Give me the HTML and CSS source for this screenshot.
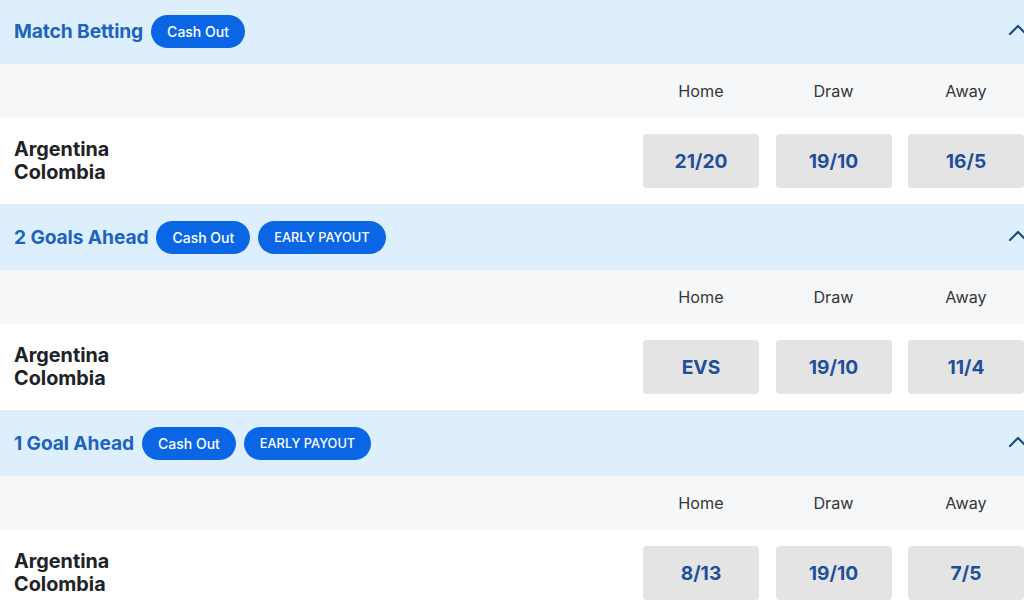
FILE: index.html
```html
<!DOCTYPE html>
<html>
<head>
<meta charset="utf-8">
<link rel="stylesheet" href="styles.css">
</head>
<body>
<div class="page">
  <section class="market">
    <div class="market-head">
      <h2 class="title">Match Betting</h2>
      <span class="pill">Cash Out</span>
      <svg class="chev" width="20" height="12" viewBox="0 0 20 12"><polyline points="2,10 10,2 18,10" fill="none" stroke="#1b4a80" stroke-width="2.2" stroke-linecap="round" stroke-linejoin="round"/></svg>
    </div>
    <div class="labels">
      <div class="cols"><span>Home</span><span>Draw</span><span>Away</span></div>
    </div>
    <div class="event">
      <div class="teams"><div>Argentina</div><div>Colombia</div></div>
      <div class="cols"><button class="odd">21/20</button><button class="odd">19/10</button><button class="odd">16/5</button></div>
    </div>
  </section>
  <section class="market">
    <div class="market-head">
      <h2 class="title">2 Goals Ahead</h2>
      <span class="pill">Cash Out</span>
      <span class="pill early">EARLY PAYOUT</span>
      <svg class="chev" width="20" height="12" viewBox="0 0 20 12"><polyline points="2,10 10,2 18,10" fill="none" stroke="#1b4a80" stroke-width="2.2" stroke-linecap="round" stroke-linejoin="round"/></svg>
    </div>
    <div class="labels">
      <div class="cols"><span>Home</span><span>Draw</span><span>Away</span></div>
    </div>
    <div class="event">
      <div class="teams"><div>Argentina</div><div>Colombia</div></div>
      <div class="cols"><button class="odd">EVS</button><button class="odd">19/10</button><button class="odd">11/4</button></div>
    </div>
  </section>
  <section class="market">
    <div class="market-head">
      <h2 class="title">1 Goal Ahead</h2>
      <span class="pill">Cash Out</span>
      <span class="pill early">EARLY PAYOUT</span>
      <svg class="chev" width="20" height="12" viewBox="0 0 20 12"><polyline points="2,10 10,2 18,10" fill="none" stroke="#1b4a80" stroke-width="2.2" stroke-linecap="round" stroke-linejoin="round"/></svg>
    </div>
    <div class="labels">
      <div class="cols"><span>Home</span><span>Draw</span><span>Away</span></div>
    </div>
    <div class="event">
      <div class="teams"><div>Argentina</div><div>Colombia</div></div>
      <div class="cols"><button class="odd">8/13</button><button class="odd">19/10</button><button class="odd">7/5</button></div>
    </div>
  </section>
</div>
</body>
</html>
```

FILE: styles.css
```css
html, body {
  margin: 0;
  padding: 0;
  background: #ffffff;
  overflow: hidden;
}
body {
  font-family: Inter, "Noto Sans", "Liberation Sans", sans-serif;
  color: #222428;
}
.page {
  margin-top: -2px;
}
.market {
  border-top: 2px solid #e4ebf1;
}
.market-head {
  height: 64px;
  background: #ddeffd;
  display: flex;
  align-items: center;
  padding-left: 14px;
  gap: 8px;
  overflow: hidden;
}
.title {
  margin: 0 0 2px 0;
  font-size: 19.2px;
  font-weight: 700;
  color: #1d63c0;
  letter-spacing: -0.1px;
}
.pill {
  height: 33px;
  padding: 0 16px;
  border-radius: 17px;
  background: #0a66e4;
  color: #ffffff;
  font-size: 14px;
  font-weight: 500;
  display: flex;
  align-items: center;
  margin-bottom: 1px;
}
.pill.early {
  padding: 0 16px;
  font-size: 12.8px;
}
.chev {
  margin-left: auto;
  margin-right: -4px;
  margin-bottom: 4px;
}
.labels {
  height: 54px;
  background: #f6f7f9;
  display: flex;
  justify-content: flex-end;
  align-items: center;
}
.cols {
  display: grid;
  grid-template-columns: repeat(3, 116px);
  column-gap: 16.5px;
}
.labels .cols span {
  text-align: center;
  font-size: 16.2px;
  color: #33363a;
}
.event {
  height: 86px;
  display: flex;
  align-items: center;
  justify-content: space-between;
  background: #ffffff;
}
.teams {
  padding-left: 14px;
  font-size: 19.8px;
  font-weight: 700;
  line-height: 23px;
  color: #202226;
}
.odd {
  height: 54px;
  border: none;
  border-radius: 4px;
  background: #e4e4e4;
  color: #1f4f9c;
  font-family: Inter, "Noto Sans", "Liberation Sans", sans-serif;
  font-size: 19.2px;
  font-weight: 700;
  padding: 0;
}
```
